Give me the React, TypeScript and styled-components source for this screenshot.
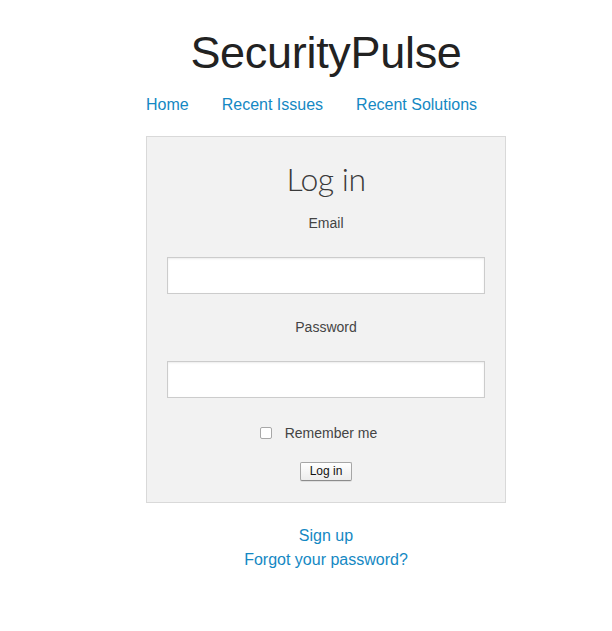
import React from "react";
import styled, { createGlobalStyle } from "styled-components";

const Global = createGlobalStyle`
  html, body { margin: 0; padding: 0; background: #ffffff; }
  body { font-family: "Liberation Sans", Arial, sans-serif; color: #333; }
  * { box-sizing: border-box; }
`;

const Page = styled.div`
  padding: 0 0 60px 40px;
`;

const Container = styled.div`
  width: 360px;
  margin: 0 auto;
`;

const Title = styled.h1`
  margin: 0;
  padding-top: 28px;
  font-family: "Liberation Sans", Arial, sans-serif;
  font-weight: 400;
  font-size: 45px;
  line-height: 50px;
  color: #222;
  text-align: center;
  letter-spacing: -0.3px;
`;

const Nav = styled.nav`
  display: flex;
  gap: 33px;
  margin-top: 15px;
  line-height: 24px;
`;

const Link = styled.a`
  font-size: 16px;
  color: #1488c3;
  text-decoration: none;
  cursor: pointer;
`;

const Box = styled.form`
  margin-top: 19px;
  border: 1px solid #d9d9d9;
  background: #f2f2f2;
  padding: 20px 20px 21px;
  display: flex;
  flex-direction: column;
  align-items: center;
`;

const Heading = styled.h2`
  margin: 2px 0 0;
  font-family: Lato, "Open Sans", sans-serif;
  font-weight: 300;
  font-size: 32px;
  line-height: 40px;
  color: #3a3a3a;
  letter-spacing: -0.5px;
`;

const Label = styled.label`
  display: block;
  font-size: 14px;
  line-height: 20px;
  color: #444;
  margin-top: ${(p: { $first?: boolean }) => (p.$first ? "14px" : "23px")};
  margin-bottom: 24px;
`;

const Input = styled.input`
  width: 318px;
  height: 37px;
  border: 1px solid #cccccc;
  background: #fff;
  box-shadow: inset 0 1px 2px rgba(0, 0, 0, 0.08);
  padding: 4px 8px;
  font-size: 14px;
  outline: none;
`;

const CheckRow = styled.label`
  display: flex;
  align-items: center;
  gap: 13px;
  margin-top: 25px;
  margin-right: 15px;
  font-size: 14px;
  line-height: 20px;
  color: #444;
`;

const Check = styled.input`
  width: 12px;
  height: 12px;
  margin: 0 0 1px;
  appearance: none;
  border: 1px solid #a8a8a8;
  border-radius: 2px;
  background: #fff;
`;

const Button = styled.button`
  margin-top: 19px;
  height: 19px;
  padding: 0 9px;
  font-family: "Liberation Sans", Arial, sans-serif;
  font-size: 12px;
  line-height: 17px;
  color: #111;
  border: 1px solid #a6a6a6;
  border-bottom-color: #8c8c8c;
  border-radius: 2px;
  background: linear-gradient(#ffffff, #ececec);
  box-shadow: 0 1px 0 rgba(0, 0, 0, 0.08);
`;

const Footer = styled.div`
  margin-top: 21px;
  display: flex;
  flex-direction: column;
  align-items: center;
  line-height: 24px;
`;

export default function App() {
  return (
    <>
      <Global />
      <Page>
        <Container>
          <Title>SecurityPulse</Title>
          <Nav>
            <Link>Home</Link>
            <Link>Recent Issues</Link>
            <Link>Recent Solutions</Link>
          </Nav>
          <Box onSubmit={(e) => e.preventDefault()}>
            <Heading>Log in</Heading>
            <Label $first htmlFor="email">Email</Label>
            <Input id="email" type="email" />
            <Label htmlFor="password">Password</Label>
            <Input id="password" type="password" />
            <CheckRow>
              <Check type="checkbox" />
              Remember me
            </CheckRow>
            <Button type="submit">Log in</Button>
          </Box>
          <Footer>
            <Link>Sign up</Link>
            <Link>Forgot your password?</Link>
          </Footer>
        </Container>
      </Page>
    </>
  );
}
